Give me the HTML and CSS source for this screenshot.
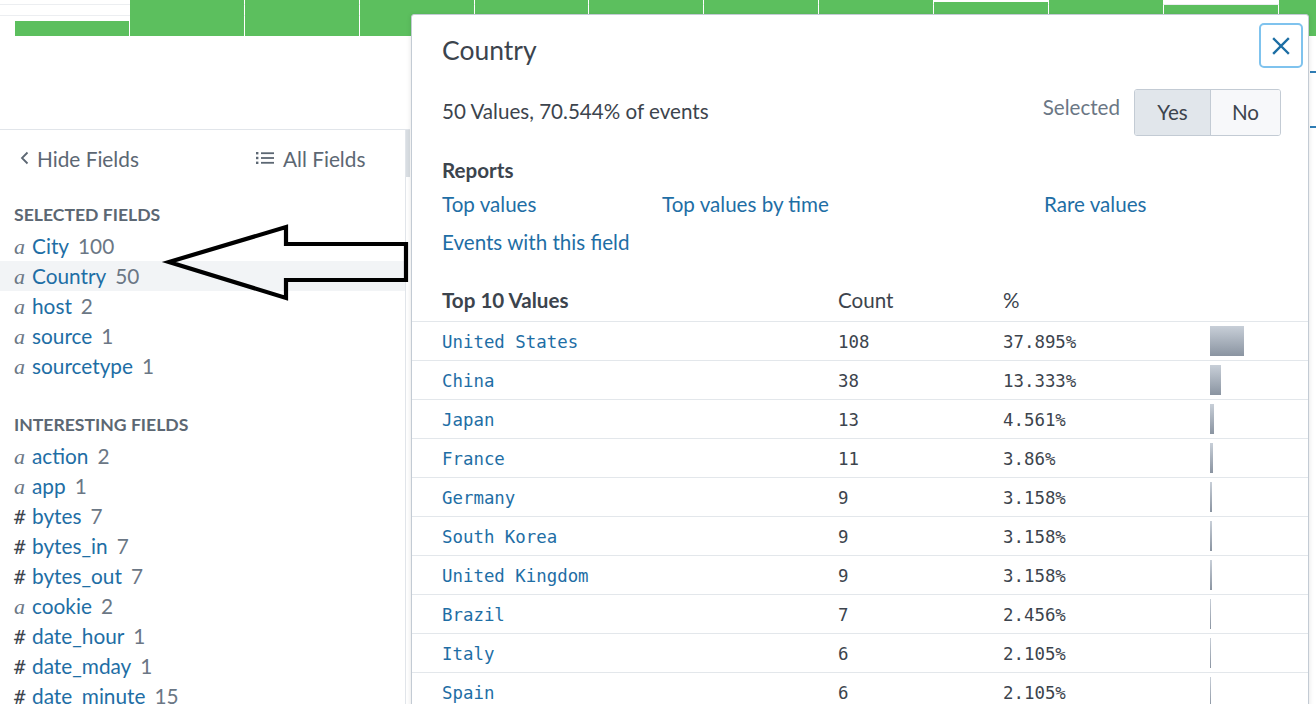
FILE: index.html
```html
<!DOCTYPE html>
<html lang="en">
<head>
<meta charset="utf-8">
<title>Country field summary</title>
<link rel="stylesheet" href="styles.css">
</head>
<body>
<div class="page">
  <header class="top">
    <div class="chart">
      <div class="bar" style="height:15px"></div>
      <div class="bar" style="height:36px"></div>
      <div class="bar" style="height:36px"></div>
      <div class="bar" style="height:36px"></div>
      <div class="bar" style="height:36px"></div>
      <div class="bar" style="height:36px"></div>
      <div class="bar" style="height:36px"></div>
      <div class="bar" style="height:36px"></div>
      <div class="bar" style="height:34px"></div>
      <div class="bar" style="height:36px"></div>
      <div class="bar" style="height:31px"></div>
      <div class="bar" style="height:36px"></div>
    </div>
    <div class="top-rest"><div class="tab-marks"></div></div>
  </header>

  <div class="content">
    <aside class="sidebar">
      <div class="sidebar-inner">
        <div class="sidebar-head">
          <span class="hide-fields">
            <svg class="chev" width="9" height="14" viewBox="0 0 9 14"><polyline points="7.5,1.5 2,7 7.5,12.5" fill="none" stroke="#5c6773" stroke-width="1.8"/></svg>Hide Fields
          </span>
          <span class="all-fields">
            <svg class="list-ico" width="18" height="14" viewBox="0 0 18 14"><rect x="0" y="1" width="2.4" height="2.4" fill="#5c6773"/><rect x="0" y="5.8" width="2.4" height="2.4" fill="#5c6773"/><rect x="0" y="10.6" width="2.4" height="2.4" fill="#5c6773"/><rect x="5" y="1.3" width="13" height="1.8" fill="#5c6773"/><rect x="5" y="6.1" width="13" height="1.8" fill="#5c6773"/><rect x="5" y="10.9" width="13" height="1.8" fill="#5c6773"/></svg>All Fields
          </span>
        </div>

        <div class="group-title">Selected Fields</div>
        <ul class="fields">
          <li class="field"><span class="ftype str">a</span><span class="fname">City</span><span class="fcount">100</span></li>
          <li class="field active"><span class="ftype str">a</span><span class="fname">Country</span><span class="fcount">50</span></li>
          <li class="field"><span class="ftype str">a</span><span class="fname">host</span><span class="fcount">2</span></li>
          <li class="field"><span class="ftype str">a</span><span class="fname">source</span><span class="fcount">1</span></li>
          <li class="field"><span class="ftype str">a</span><span class="fname">sourcetype</span><span class="fcount">1</span></li>
        </ul>

        <div class="group-title interesting">Interesting Fields</div>
        <ul class="fields">
          <li class="field"><span class="ftype str">a</span><span class="fname">action</span><span class="fcount">2</span></li>
          <li class="field"><span class="ftype str">a</span><span class="fname">app</span><span class="fcount">1</span></li>
          <li class="field"><span class="ftype num">#</span><span class="fname">bytes</span><span class="fcount">7</span></li>
          <li class="field"><span class="ftype num">#</span><span class="fname">bytes_in</span><span class="fcount">7</span></li>
          <li class="field"><span class="ftype num">#</span><span class="fname">bytes_out</span><span class="fcount">7</span></li>
          <li class="field"><span class="ftype str">a</span><span class="fname">cookie</span><span class="fcount">2</span></li>
          <li class="field"><span class="ftype num">#</span><span class="fname">date_hour</span><span class="fcount">1</span></li>
          <li class="field"><span class="ftype num">#</span><span class="fname">date_mday</span><span class="fcount">1</span></li>
          <li class="field"><span class="ftype num">#</span><span class="fname">date_minute</span><span class="fcount">15</span></li>
        </ul>
      </div>
      <div class="scrollbar"><div class="thumb"></div></div>
    </aside>
    <main class="main"></main>
  </div>

  <svg class="annot-arrow" width="1316" height="704" viewBox="0 0 1316 704">
    <polygon points="169,262 286,227 286,244 406,244 406,280 286,280 286,298" fill="none" stroke="#000" stroke-width="4.2" stroke-linejoin="miter"/>
  </svg>

  <section class="popup">
    <div class="popup-head">
      <h2 class="popup-title">Country</h2>
      <button class="close-btn" type="button" aria-label="Close">
        <svg width="18" height="18" viewBox="0 0 18 18"><path d="M2 2 L16 16 M16 2 L2 16" stroke="#1c6ea4" stroke-width="2.4" stroke-linecap="square"/></svg>
      </button>
    </div>

    <div class="summary">
      <span class="summary-text">50 Values, 70.544% of events</span>
      <span class="selected-label">Selected</span>
      <div class="toggle">
        <span class="seg seg-yes">Yes</span>
        <span class="seg seg-no">No</span>
      </div>
    </div>

    <div class="reports">
      <div class="reports-title">Reports</div>
      <div class="links">
        <a class="link">Top values</a>
        <a class="link">Top values by time</a>
        <a class="link">Rare values</a>
        <a class="link">Events with this field</a>
      </div>
    </div>

    <div class="values-table">
      <div class="trow thead">
        <span class="c-name">Top 10 Values</span>
        <span class="c-count">Count</span>
        <span class="c-pct">%</span>
        <span class="c-bar"></span>
      </div>
      <div class="trow"><span class="c-name val">United States</span><span class="c-count num">108</span><span class="c-pct num">37.895%</span><span class="c-bar"><i class="pbar" style="width:34px"></i></span></div>
      <div class="trow"><span class="c-name val">China</span><span class="c-count num">38</span><span class="c-pct num">13.333%</span><span class="c-bar"><i class="pbar" style="width:11px"></i></span></div>
      <div class="trow"><span class="c-name val">Japan</span><span class="c-count num">13</span><span class="c-pct num">4.561%</span><span class="c-bar"><i class="pbar" style="width:4px"></i></span></div>
      <div class="trow"><span class="c-name val">France</span><span class="c-count num">11</span><span class="c-pct num">3.86%</span><span class="c-bar"><i class="pbar" style="width:3px"></i></span></div>
      <div class="trow"><span class="c-name val">Germany</span><span class="c-count num">9</span><span class="c-pct num">3.158%</span><span class="c-bar"><i class="pbar" style="width:2px"></i></span></div>
      <div class="trow"><span class="c-name val">South Korea</span><span class="c-count num">9</span><span class="c-pct num">3.158%</span><span class="c-bar"><i class="pbar" style="width:2px"></i></span></div>
      <div class="trow"><span class="c-name val">United Kingdom</span><span class="c-count num">9</span><span class="c-pct num">3.158%</span><span class="c-bar"><i class="pbar" style="width:2px"></i></span></div>
      <div class="trow"><span class="c-name val">Brazil</span><span class="c-count num">7</span><span class="c-pct num">2.456%</span><span class="c-bar"><i class="pbar" style="width:1px"></i></span></div>
      <div class="trow"><span class="c-name val">Italy</span><span class="c-count num">6</span><span class="c-pct num">2.105%</span><span class="c-bar"><i class="pbar" style="width:1px"></i></span></div>
      <div class="trow"><span class="c-name val">Spain</span><span class="c-count num">6</span><span class="c-pct num">2.105%</span><span class="c-bar"><i class="pbar" style="width:1px"></i></span></div>
    </div>
  </section>
</div>
</body>
</html>
```

FILE: styles.css
```css
* { box-sizing: border-box; }

html, body {
  margin: 0;
  padding: 0;
  background: #fff;
}

body {
  width: 1316px;
  height: 704px;
  overflow: hidden;
  font-family: Lato, "Open Sans", "Liberation Sans", sans-serif;
  font-size: 20.6px;
  color: #3c444d;
}

.page {
  position: relative;
  width: 1316px;
  height: 704px;
  overflow: hidden;
}

/* ---------- top chart ---------- */
.top {
  height: 129px;
  display: flex;
  flex-direction: column;
}

.chart {
  height: 36px;
  padding-left: 15px;
  display: flex;
  align-items: flex-end;
  gap: 1px;
  overflow: hidden;
  background-image:
    linear-gradient(#eceef1, #eceef1),
    linear-gradient(#eceef1, #eceef1);
  background-size: 100% 1px, 100% 1px;
  background-position: 0 4px, 0 15px;
  background-repeat: no-repeat;
}

.bar {
  flex: 0 0 113.9px;
  background: #5cbf5e;
}

.top-rest {
  flex: 1;
  display: flex;
  justify-content: flex-end;
}

.tab-marks {
  width: 6px;
  margin-top: 35px;
  height: 57px;
  border-top: 2px solid #2f7db5;
  border-bottom: 2px solid #2f7db5;
}

/* ---------- sidebar ---------- */
.content {
  display: flex;
  height: 575px;
}

.sidebar {
  width: 410px;
  display: flex;
  border-top: 1px solid #e1e5ea;
}

.sidebar-inner {
  flex: 1;
}

.scrollbar {
  width: 5px;
  border-left: 1px solid #e1e5ea;
}

.thumb {
  width: 4px;
  height: 47px;
  background: #d9dee3;
}

.main { flex: 1; }

.sidebar-head {
  height: 58px;
  display: flex;
  align-items: center;
  padding-left: 20px;
  padding-bottom: 2px;
  color: #5c6773;
  font-size: 20.8px;
}

.hide-fields {
  width: 236px;
  display: flex;
  align-items: center;
}

.chev { margin-right: 8px; }

.all-fields {
  display: flex;
  align-items: center;
}

.list-ico { margin-right: 9px; }

.group-title {
  margin-top: 12px;
  height: 31px;
  line-height: 30px;
  padding-left: 14px;
  font-size: 17.6px;
  font-weight: 700;
  text-transform: uppercase;
  color: #5c6773;
}

.group-title.interesting { margin-top: 29px; }

.fields {
  list-style: none;
  margin: 0;
  padding: 0;
}

.field {
  height: 30px;
  line-height: 29px;
  padding-left: 14px;
  display: flex;
  align-items: baseline;
  font-size: 20.8px;
  white-space: nowrap;
}

.field.active { background: #f2f4f6; }

.ftype {
  display: inline-block;
  width: 18px;
  color: #6b7785;
}

.ftype.str {
  font-family: "Liberation Serif", "DejaVu Serif", serif;
  font-style: italic;
  font-size: 22px;
}

.ftype.num { font-size: 19px; }

.fname { color: #1e6ea5; }

.fcount {
  margin-left: 9px;
  color: #6b7785;
}

/* ---------- annotation arrow ---------- */
.annot-arrow {
  position: absolute;
  left: 0;
  top: 0;
  pointer-events: none;
  z-index: 3;
}

/* ---------- popup ---------- */
.popup {
  position: absolute;
  left: 411px;
  top: 14px;
  width: 898px;
  height: 720px;
  background: #fff;
  border: 1px solid #c3cbd4;
  border-radius: 3px;
  box-shadow: 0 1px 5px rgba(0, 0, 0, 0.12);
  z-index: 2;
}

.popup-head {
  display: flex;
  justify-content: space-between;
  align-items: flex-start;
  padding: 8px 5px 0 30px;
}

.popup-title {
  margin: 13px 0 0;
  font-size: 26.5px;
  line-height: 28px;
  font-weight: 400;
  color: #3c444d;
}

.close-btn {
  width: 44px;
  height: 45px;
  padding: 0;
  background: #fff;
  border: 2px solid #7fc3ee;
  border-radius: 5px;
  display: flex;
  align-items: center;
  justify-content: center;
}

.summary {
  margin-top: 21px;
  height: 47px;
  display: flex;
  align-items: center;
  padding: 0 27px 0 30px;
}

.summary-text {
  flex: 1;
  margin-bottom: 3px;
}

.selected-label {
  margin-right: 14px;
  margin-bottom: 11px;
  color: #6b7785;
}

.toggle {
  display: flex;
  height: 47px;
  border: 1px solid #c3cbd4;
  border-radius: 3px;
  overflow: hidden;
}

.seg {
  display: flex;
  align-items: center;
  justify-content: center;
  padding-bottom: 2px;
  color: #3c444d;
}

.seg-yes {
  width: 75px;
  background: #e1e6eb;
}

.seg-no {
  width: 70px;
  background: #f7f8fa;
  border-left: 1px solid #c3cbd4;
}

.reports {
  margin-top: 22px;
  padding: 0 30px;
}

.reports-title {
  line-height: 24px;
  font-weight: 700;
}

.links {
  margin-top: 10px;
  display: grid;
  grid-template-columns: 220px 382px 1fr;
  row-gap: 14px;
  line-height: 24px;
}

.link {
  color: #1e6ea5;
  text-decoration: none;
}

.values-table { margin-top: 27px; }

.trow {
  display: grid;
  grid-template-columns: 426px 165px 207px 1fr;
  align-items: center;
  height: 39px;
  border-bottom: 1px solid #e3e7eb;
}

.trow.thead {
  height: 41px;
  padding-bottom: 2px;
}

.thead .c-name { font-weight: 700; }

.c-name { padding-left: 30px; }

.val, .num {
  font-family: "DejaVu Sans Mono", "Liberation Mono", monospace;
  font-size: 17.4px;
  padding-top: 1px;
}

.val { color: #1e6ea5; }

.num { color: #3c444d; }

.c-bar {
  display: flex;
  align-items: center;
}

.pbar {
  display: block;
  height: 30px;
  background: linear-gradient(#c8cfd8, #8a94a1);
}
```
